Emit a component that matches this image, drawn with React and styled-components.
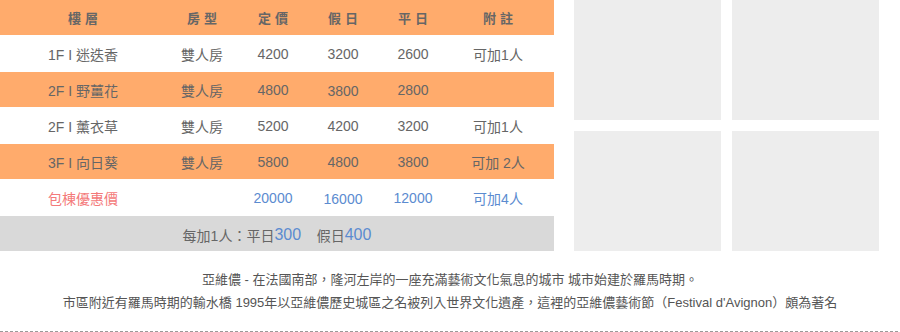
import React from "react";
import styled, { createGlobalStyle } from "styled-components";

const Global = createGlobalStyle`
  html, body { margin: 0; padding: 0; background: #fff; }
  body { font-family: "Liberation Sans", Arial, "Noto Sans CJK TC", sans-serif; }
`;

const Page = styled.div`
  width: 900px;
  height: 332px;
  overflow: hidden;
  display: flex;
  flex-direction: column;
`;

const Top = styled.div`
  display: flex;
  gap: 20px;
`;

const Table = styled.div`
  width: 554px;
  display: flex;
  flex-direction: column;
`;

const Row = styled.div`
  display: grid;
  grid-template-columns: 166px 72px 70px 70px 70px 100px;
  height: ${(p) => p.$h}px;
  align-items: center;
  background: ${(p) => p.$bg};
`;

const Cell = styled.div`
  text-align: center;
  font-size: 14px;
  color: ${(p) => p.$color || "#666"};
  position: relative;
  top: ${(p) => p.$shift || 0}px;
`;

const HeadCell = styled.div`
  text-align: center;
  font-size: 13px;
  font-weight: bold;
  color: #666;
  letter-spacing: 4px;
  padding-left: 4px;
`;

const Footer = styled.div`
  height: 35px;
  background: #d9d9d9;
  display: flex;
  align-items: center;
  justify-content: center;
  font-size: 14px;
  color: #666;
  padding-top: 2px;
  box-sizing: border-box;
`;

const Num = styled.span`
  color: #5b8bd0;
  font-size: 16px;
`;

const Gallery = styled.div`
  display: grid;
  grid-template-columns: 147px 147px;
  grid-template-rows: 120px 120px;
  column-gap: 11px;
  row-gap: 11px;
`;

const Photo = styled.div`
  background: #ededed;
`;

const Desc = styled.div`
  padding-top: 17px;
  text-align: center;
  font-size: 13px;
  line-height: 23px;
  color: #555;
`;

const Divider = styled.div`
  margin-top: auto;
  height: 1px;
  background: repeating-linear-gradient(to right, #999 0 3px, transparent 3px 5px);
`;

const ORANGE = "#ffab6c";
const PINK = "#f47a7a";
const BLUE = "#5b8bd0";

const rows = [
  { bg: "#fff", h: 37, cells: ["1F I 迷迭香", "雙人房", "4200", "3200", "2600", "可加1人"] },
  { bg: ORANGE, h: 35, cells: ["2F I 野薑花", "雙人房", "4800", "3800", "2800", ""], shifts: [0, 0, 0, 1, 0, 0] },
  { bg: "#fff", h: 37, cells: ["2F I 薰衣草", "雙人房", "5200", "4200", "3200", "可加1人"] },
  { bg: ORANGE, h: 35, cells: ["3F I 向日葵", "雙人房", "5800", "4800", "3800", "可加 2人"] },
  {
    bg: "#fff",
    h: 37,
    cells: ["包棟優惠價", "", "20000", "16000", "12000", "可加4人"],
    colors: [PINK, null, BLUE, BLUE, BLUE, BLUE],
    shifts: [0, 0, 0, 1, 0, 0],
  },
];

export default function App() {
  return (
    <Page>
      <Global />
      <Top>
        <Table>
          <Row $bg={ORANGE} $h={35}>
            {["樓層", "房型", "定價", "假日", "平日", "附註"].map((t) => (
              <HeadCell key={t}>{t}</HeadCell>
            ))}
          </Row>
          {rows.map((r, i) => (
            <Row key={i} $bg={r.bg} $h={r.h}>
              {r.cells.map((c, j) => (
                <Cell
                  key={j}
                  $color={r.colors ? r.colors[j] : null}
                  $shift={r.shifts ? r.shifts[j] : 0}
                >
                  {c}
                </Cell>
              ))}
            </Row>
          ))}
          <Footer>
            每加1人：平日<Num>300</Num>&nbsp;&nbsp;&nbsp;&nbsp;假日<Num>400</Num>
          </Footer>
        </Table>
        <Gallery>
          <Photo />
          <Photo />
          <Photo />
          <Photo />
        </Gallery>
      </Top>
      <Desc>
        亞維儂 - 在法國南部，隆河左岸的一座充滿藝術文化氣息的城市 城市始建於羅馬時期。
        <br />
        市區附近有羅馬時期的輸水橋 1995年以亞維儂歷史城區之名被列入世界文化遺產，這裡的亞維儂藝術節（Festival d'Avignon）頗為著名
      </Desc>
      <Divider />
    </Page>
  );
}
